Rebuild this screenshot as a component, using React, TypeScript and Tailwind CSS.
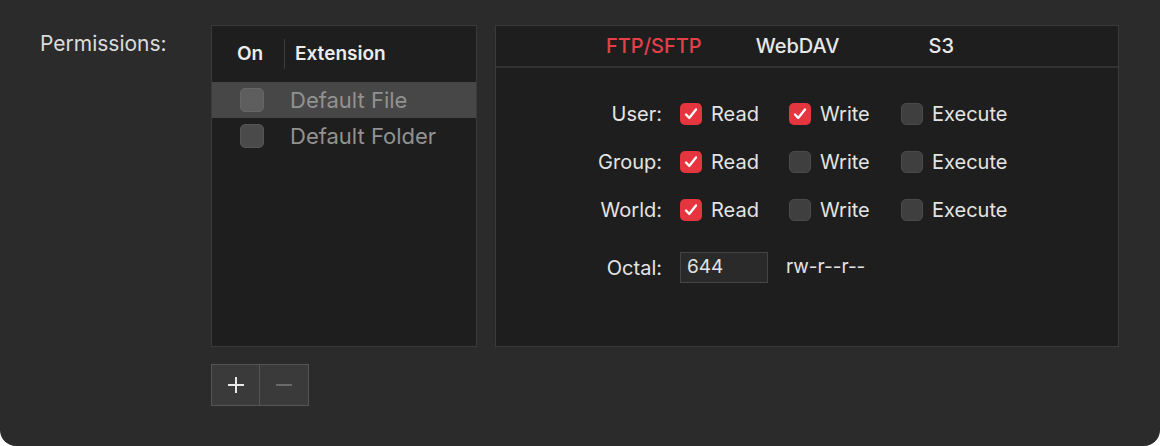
import React from "react";

const Check = ({ on }: { on: boolean }) =>
  on ? (
    <div className="w-[22px] h-[22px] rounded-[5px] bg-[#e5363f] flex items-center justify-center">
      <svg width="16" height="16" viewBox="0 0 16 16"><path d="M3 8.5l3.2 3.5L13 3.5" stroke="white" strokeWidth="2.3" fill="none" strokeLinecap="round" strokeLinejoin="round" /></svg>
    </div>
  ) : (
    <div className="w-[22px] h-[22px] rounded-[5px] bg-[#3f3f3f] border border-[#4a4a4a]" />
  );

const rows: [string, boolean[]][] = [
  ["User:", [true, true, false]],
  ["Group:", [true, false, false]],
  ["World:", [true, false, false]],
];

export default function App() {
  return (
    <div className="w-[1160px] h-[446px] bg-white" style={{ fontFamily: "Inter, 'Liberation Sans', sans-serif" }}>
      <div className="w-full h-full bg-[#2b2b2b] rounded-b-[16px] flex pt-[25px]">
        <div className="w-[211px] pl-[40px] pt-[3px] text-[21px] text-[#dcdcdc]">Permissions:</div>
        <div className="flex flex-col">
          <div className="flex gap-[18px]">
            <div className="w-[266px] h-[322px] bg-[#1e1e1e] border border-[#3a3a3a] flex flex-col">
              <div className="h-[56px] flex items-center text-[19px] font-semibold text-[#ececec]">
                <span className="pl-[25px] w-[72px]">On</span>
                <div className="w-px h-[30px] bg-[#3d3d3d] mr-[10px]" />
                <span>Extension</span>
              </div>
              {["Default File", "Default Folder"].map((t, i) => (
                <div key={t} className={`h-[36px] flex items-center text-[22px] text-[#929292] ${i === 0 ? "bg-[#474747]" : ""}`}>
                  <div className={`ml-[28px] mr-[26px] w-[24px] h-[24px] rounded-[5px] border ${i === 0 ? "bg-[#5e5e5e] border-[#666]" : "bg-[#4a4a4a] border-[#555]"}`} />
                  {t}
                </div>
              ))}
            </div>
            <div className="w-[624px] h-[322px] bg-[#1e1e1e] border border-[#3a3a3a] flex flex-col">
              <div className="h-[42px] border-b-2 border-[#333] flex items-center text-[20px] font-medium text-[#e8e8e8]">
                <span className="ml-[110px] text-[#e5404a]">FTP/SFTP</span>
                <span className="ml-[54px]">WebDAV</span>
                <span className="ml-[89px]">S3</span>
              </div>
              <div className="flex flex-col pt-[22px] text-[20px] text-[#e4e4e4]">
                {rows.map(([label, v]) => (
                  <div key={label} className="h-[48px] flex items-center">
                    <span className="w-[184px] text-right pr-[18px]">{label}</span>
                    <div className="flex items-center w-[109px] gap-[9px]"><Check on={v[0]} />Read</div>
                    <div className="flex items-center w-[112px] gap-[9px]"><Check on={v[1]} />Write</div>
                    <div className="flex items-center gap-[9px]"><Check on={v[2]} />Execute</div>
                  </div>
                ))}
                <div className="flex items-center mt-[18px]">
                  <span className="w-[184px] text-right pr-[18px]">Octal:</span>
                  <div className="w-[88px] h-[31px] bg-[#2a2a2a] border border-[#444] flex items-center pl-[6px] text-[19px]">644</div>
                  <span className="ml-[18px] text-[19px]">rw-r--r--</span>
                </div>
              </div>
            </div>
          </div>
          <div className="mt-[17px] flex w-[98px] h-[42px] border border-[#555] bg-[#3a3a3a]">
            <div className="w-[48px] flex items-center justify-center border-r border-[#555]">
              <svg width="20" height="20" viewBox="0 0 20 20"><path d="M10 2v16M2 10h16" stroke="#e8e8e8" strokeWidth="2" /></svg>
            </div>
            <div className="flex-1 flex items-center justify-center">
              <svg width="20" height="20" viewBox="0 0 20 20"><path d="M2 10h16" stroke="#6a6a6a" strokeWidth="2" /></svg>
            </div>
          </div>
        </div>
      </div>
    </div>
  );
}
